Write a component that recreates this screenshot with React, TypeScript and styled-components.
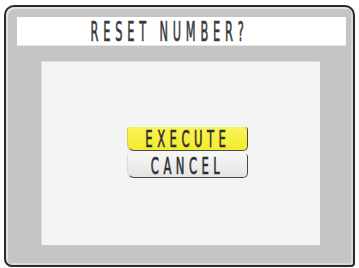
import React from "react";
import styled, { createGlobalStyle } from "styled-components";

const GlobalStyle = createGlobalStyle`
  html, body {
    margin: 0;
    padding: 0;
    background: #ffffff;
  }
  body {
    font-family: "DejaVu Sans Condensed", "Liberation Sans Narrow", "DejaVu Sans", sans-serif;
  }
`;

const Page = styled.div`
  width: 359px;
  height: 268px;
  box-sizing: border-box;
  padding: 5px 4px 1px 4px;
`;

const Frame = styled.div`
  height: 100%;
  box-sizing: border-box;
  border: 2px solid #2a2a2a;
  border-radius: 10px 10px 4px 8px;
  background: #c5c5c5;
  box-shadow: inset 2px 2px 0 #e2e2e2, inset -2px -2px 0 #d8d8d8;
  padding: 10px 7px 0 11px;
  display: flex;
  flex-direction: column;
`;

const Header = styled.div`
  height: 28px;
  background: #ffffff;
  display: flex;
  align-items: center;
  justify-content: center;
  padding-right: 24px;
  box-shadow: 0 1px 0 #e6e6e6;
`;

const Title = styled.span`
  font-size: 23px;
  line-height: 1;
  color: #3a3a3a;
  letter-spacing: 8.7px;
  white-space: nowrap;
  transform: scale(0.55, 1.12);
  -webkit-text-stroke: 0.6px #3a3a3a;
  padding-top: 3px;
`;

const Body = styled.div`
  margin: 17px 26px 0 25px;
  height: 181px;
  background: #f4f4f4;
  box-shadow: -1px -1px 0 #e0e0e0;
  display: flex;
  flex-direction: column;
  align-items: center;
  justify-content: center;
  gap: 3px;
  padding-left: 13px;
  padding-bottom: 2px;
`;

const Option = styled.div<{ $active?: boolean }>`
  width: 121px;
  height: 24px;
  box-sizing: border-box;
  display: flex;
  align-items: center;
  justify-content: center;
  border-radius: 2px 3px 5px 7px;
  border-right: 1.5px solid #4a4a4a;
  border-bottom: 1.5px solid #4a4a4a;
  border-left: 1px solid ${(p) => (p.$active ? "#d8d040" : "#dcdcdc")};
  background: ${(p) =>
    p.$active
      ? "linear-gradient(#f8f25a, #f3eb2e)"
      : "linear-gradient(#f6f6f6, #e4e4e4)"};
`;

const OptionLabel = styled.span`
  font-size: 23px;
  line-height: 1;
  color: #2e2e2e;
  letter-spacing: 8px;
  white-space: nowrap;
  transform: scaleX(0.56);
  -webkit-text-stroke: 0.6px #2e2e2e;
  padding-top: 1px;
`;

export default function App() {
  return (
    <>
      <GlobalStyle />
      <Page>
        <Frame>
          <Header>
            <Title>RESET NUMBER?</Title>
          </Header>
          <Body>
            <Option $active>
              <OptionLabel>EXECUTE</OptionLabel>
            </Option>
            <Option>
              <OptionLabel>CANCEL</OptionLabel>
            </Option>
          </Body>
        </Frame>
      </Page>
    </>
  );
}
